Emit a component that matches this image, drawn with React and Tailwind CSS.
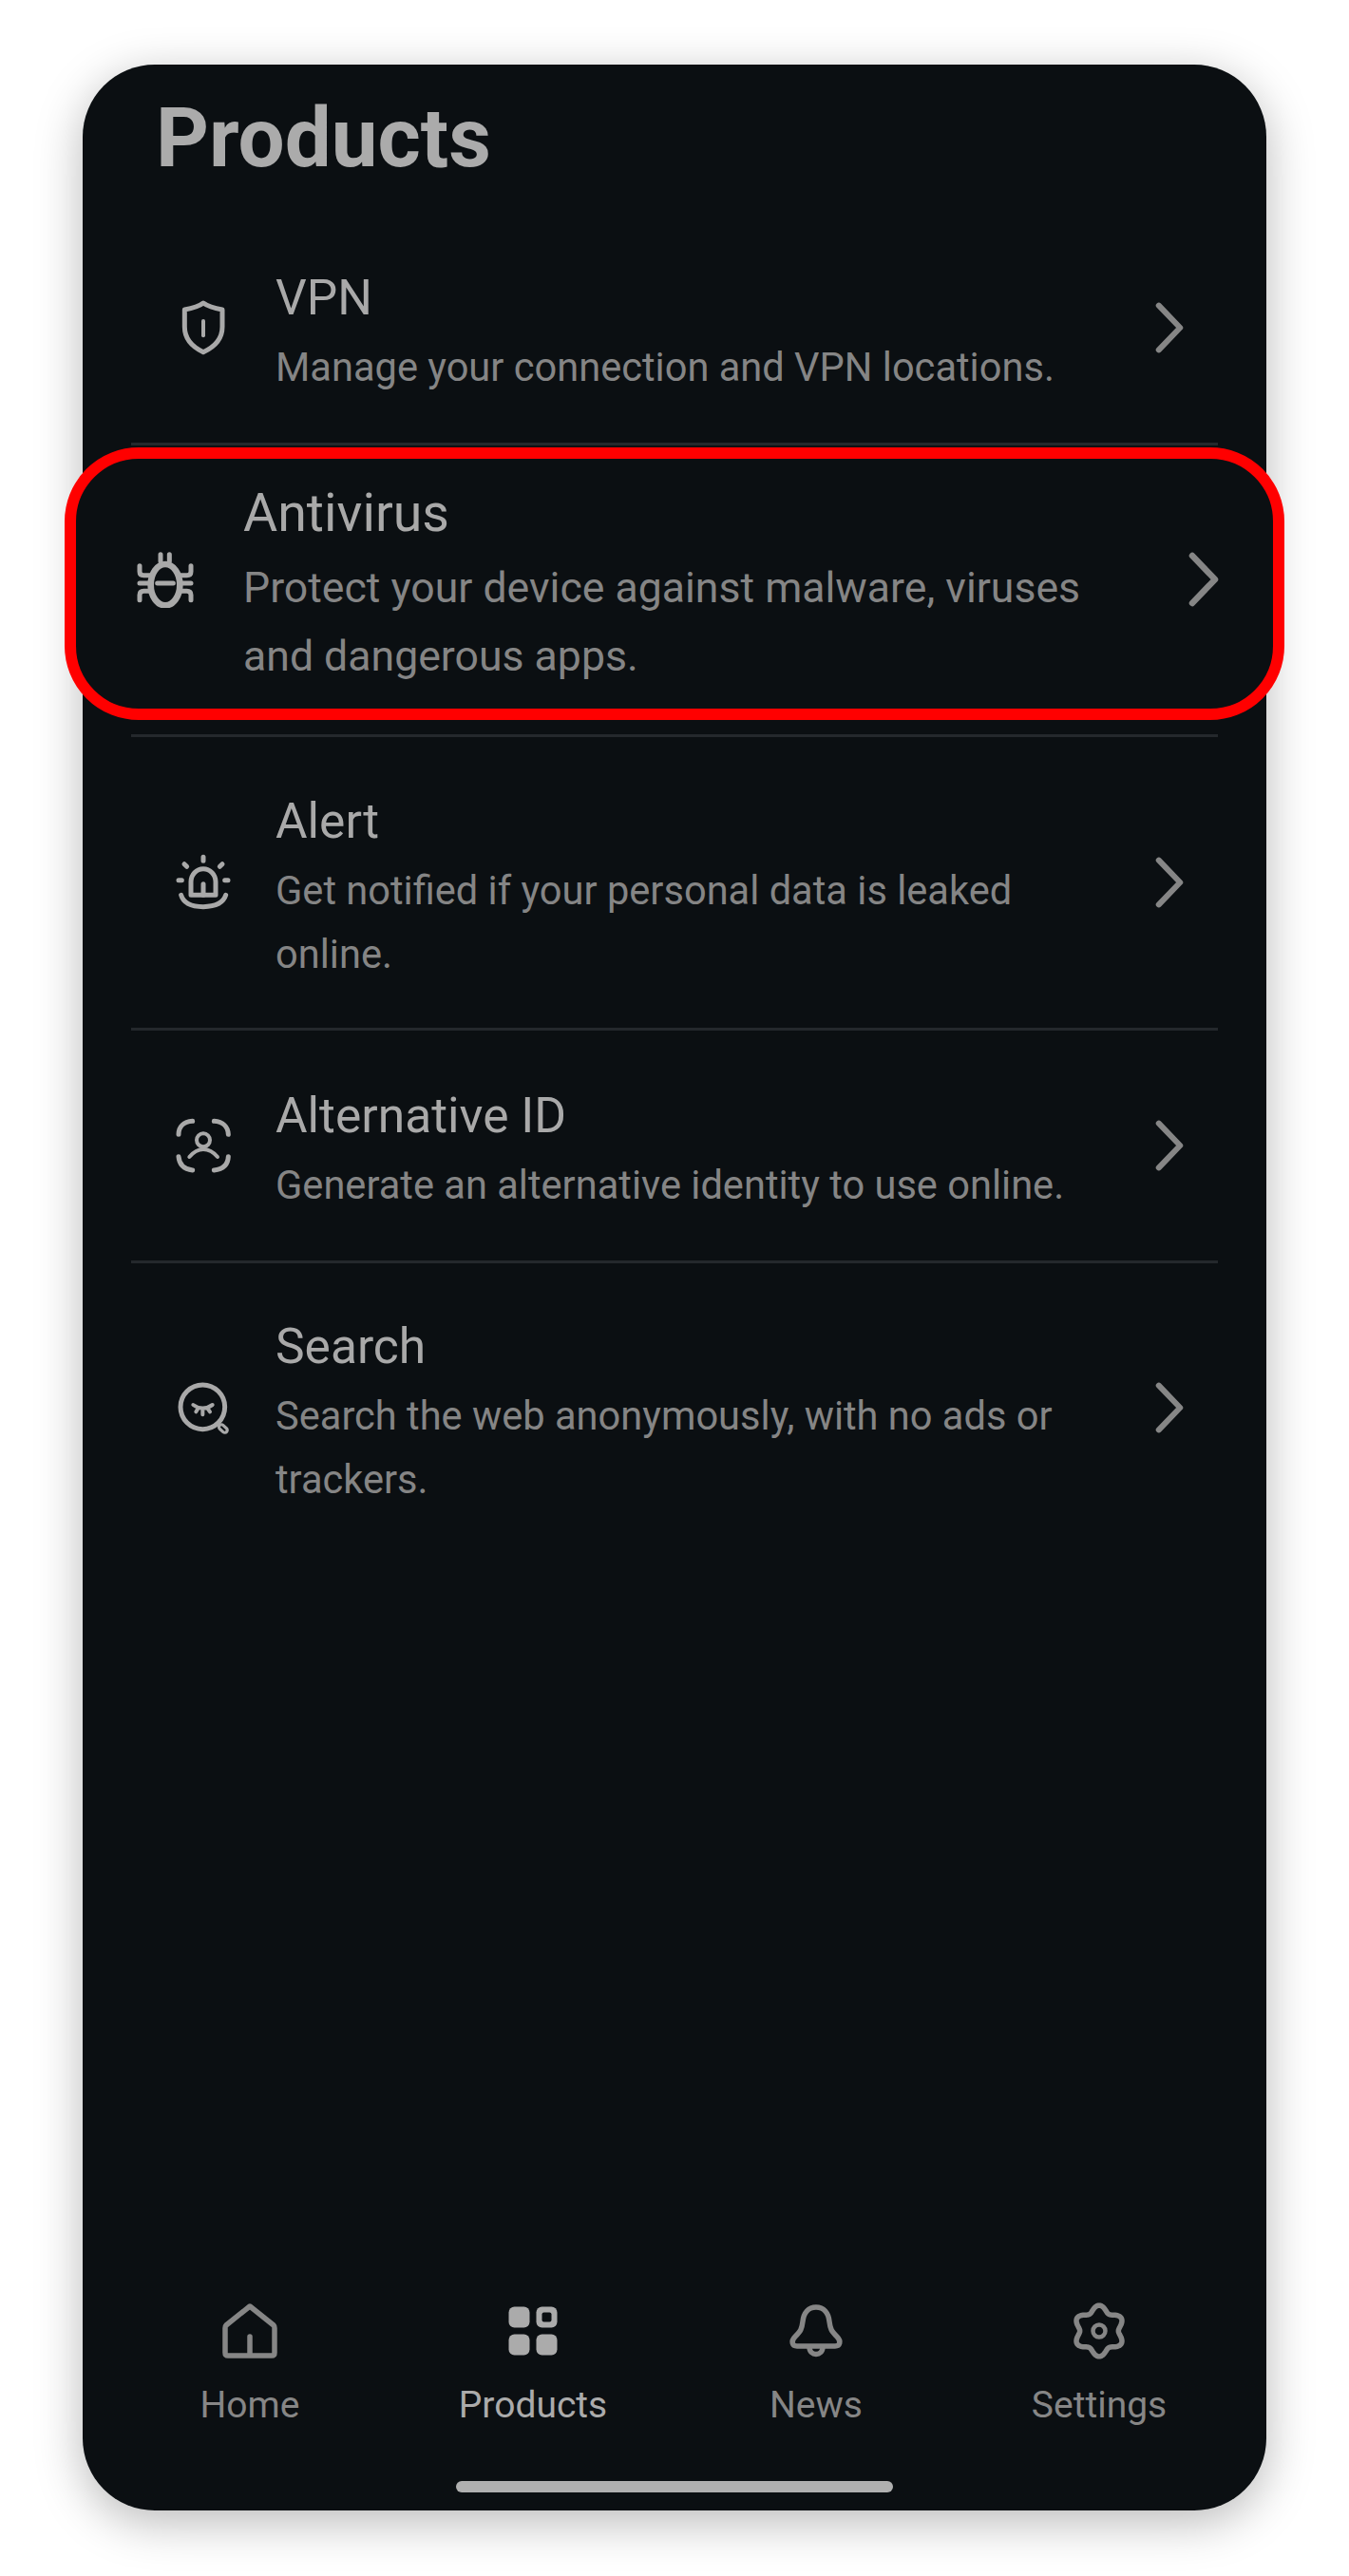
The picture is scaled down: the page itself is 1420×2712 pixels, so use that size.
import React from "react";

const BG = "#0b0f12";

function Shield() {
  return (
    <svg viewBox="72 43 180 180" className="w-full h-full" fill="none" stroke="#a9a9a9" strokeLinecap="round" strokeLinejoin="round">
      <path strokeWidth="15" d="M162 55C180 68 200 72 222 76V130C222 170 195 195 162 210C130 195 103 170 103 130V76C125 72 145 68 162 55Z" />
      <path strokeWidth="12" d="M162 112V158" />
    </svg>
  );
}
function Bug() {
  return (
    <svg viewBox="75 85 180 180" className="w-full h-full" fill="none" stroke="#a9a9a9" strokeLinecap="round" strokeLinejoin="round" strokeWidth="15">
      <ellipse cx="165" cy="192" rx="46" ry="65" strokeWidth="20" />
      <path d="M150 96V118M178 96V118M140 187H190" />
      <path d="M120 162H97Q84 162 84 150V132M120 187H84M120 212H97Q84 212 84 224V240" />
      <path d="M210 162H233Q246 162 246 150V132M210 187H246M210 212H233Q246 212 246 224V240" />
    </svg>
  );
}
function AlertIcon() {
  return (
    <svg viewBox="72 40 180 180" className="w-full h-full" fill="none" stroke="#a9a9a9" strokeLinecap="round" strokeLinejoin="round" strokeWidth="15">
      <path d="M162 50V62M102 72L110 80M84 123H94M230 123H240M214 80L222 72" />
      <path d="M123 170V128A39 41 0 0 1 201 128V170Z" />
      <path d="M162 135V170" />
      <path d="M92 170Q102 206 162 207Q222 206 233 170" />
    </svg>
  );
}
function IdIcon() {
  return (
    <svg viewBox="72 75 180 180" className="w-full h-full" fill="none" stroke="#a9a9a9" strokeLinecap="round" strokeLinejoin="round">
      <path strokeWidth="15" d="M84 130C84 105 100 90 128 88M196 88C224 90 240 105 241 130M84 200C86 226 102 240 128 243M241 200C240 226 224 240 196 243" />
      <circle cx="162" cy="148" r="21" strokeWidth="12" />
      <path strokeWidth="12" d="M118 201C134 182 148 177 162 177C176 177 191 182 207 201" />
    </svg>
  );
}
function SearchIcon() {
  return (
    <svg viewBox="75 65 180 180" className="w-full h-full" fill="none" stroke="#a9a9a9" strokeLinecap="round" strokeLinejoin="round">
      <circle cx="163" cy="153" r="70" strokeWidth="15" />
      <path strokeWidth="25" d="M222 216L233 226" />
      <path strokeWidth="6" stroke={BG} d="M222 216L233 226" />
      <path strokeWidth="12" d="M133 146Q163 168 194 146M148 158L142 168M163 162V177M179 158L186 168" />
    </svg>
  );
}
function Chevron({ className }) {
  return (
    <svg viewBox="0 0 36 60" className={className} fill="none" stroke="#868686" strokeWidth="6.5" strokeLinecap="round" strokeLinejoin="round">
      <path d="M6 5L30 30L6 55" />
    </svg>
  );
}
function HomeIcon() {
  return (
    <svg viewBox="0 0 60 60" className="w-[60px] h-[60px]" fill="none" stroke="#868686" strokeWidth="5.5" strokeLinecap="round" strokeLinejoin="round">
      <path d="M30 4L55 24Q56 25 56 27V53Q56 56 53 56H7Q4 56 4 53V27Q4 25 5 24Z" />
      <path d="M30 36V54" />
    </svg>
  );
}
function GridIcon() {
  return (
    <svg viewBox="0 0 60 60" className="w-[60px] h-[60px]" fill="#ababab">
      <rect x="4.5" y="4.5" width="22" height="22" rx="6" />
      <rect x="33.5" y="4.5" width="22" height="22" rx="6" />
      <rect x="39.5" y="10.5" width="10" height="10" rx="2" fill={BG} />
      <rect x="4.5" y="33.5" width="22" height="22" rx="6" />
      <rect x="33.5" y="33.5" width="22" height="22" rx="6" />
    </svg>
  );
}
function BellIcon() {
  return (
    <svg viewBox="0 0 60 60" className="w-[60px] h-[60px]" fill="none" stroke="#868686" strokeWidth="5.5" strokeLinecap="round" strokeLinejoin="round">
      <path d="M30 5C38 5 43 11 44 20C45 28 46 30 52 36C57 41 55 46 50 46H10C5 46 3 41 8 36C14 30 15 28 16 20C17 11 22 5 30 5Z" />
      <path d="M23 47C23 57 37 57 37 47" />
    </svg>
  );
}
const gearPath = (() => {
  const pts = [];
  for (let i = 0; i < 120; i++) {
    const t = (i / 120) * Math.PI * 2;
    const r = 23.6 + 3.3 * Math.cos(6 * t);
    pts.push(`${(30 + r * Math.sin(t)).toFixed(2)} ${(30 - r * Math.cos(t)).toFixed(2)}`);
  }
  return "M" + pts.join("L") + "Z";
})();
function GearIcon() {
  return (
    <svg viewBox="0 0 60 60" className="w-[60px] h-[60px]" fill="none" stroke="#868686" strokeWidth="5.5" strokeLinejoin="round">
      <path d={gearPath} />
      <circle cx="30" cy="30" r="6.5" strokeWidth="4.5" />
    </svg>
  );
}

function Row({ icon, title, desc, heightClass }) {
  return (
    <div className={`flex items-center pl-[46px] ${heightClass}`}>
      <div className="w-[60px] h-[60px] shrink-0">{icon}</div>
      <div className="w-[899px] pl-[46px] pt-[5px] shrink-0">
        <div className="text-[51.5px] leading-[78px] text-[#a9a9a9]">{title}</div>
        <div className="text-[41.6px] leading-[67px] text-[#858585]">{desc}</div>
      </div>
      <Chevron className="w-[34px] h-[56px] shrink-0 ml-[71px]" />
    </div>
  );
}
function Divider() {
  return <div className="h-[3px] bg-[#24282c]" />;
}
function NavItem({ icon, label, active }) {
  return (
    <div className="flex-1 flex flex-col items-center">
      {icon}
      <div className={`text-[39px] leading-[44px] mt-[26px] ${active ? "text-[#ababab]" : "text-[#868686]"}`}>{label}</div>
    </div>
  );
}

export default function App() {
  return (
    <div className="bg-white min-h-[2712px] pt-[68px] pl-[87px]" style={{ fontFamily: "Roboto, sans-serif" }}>
      <div className="w-[1246px] h-[2575px] rounded-[76px] bg-[#0b0f12] shadow-[0_12px_50px_rgba(0,0,0,0.28)] flex flex-col">
        <div className="h-[155px] pl-[77px] pt-[27px] text-[87px] leading-[100px] font-bold text-[#ababab]">Products</div>
        <div className="mx-[51px] flex flex-col">
          <Row icon={<Shield />} title="VPN" desc="Manage your connection and VPN locations." heightClass="h-[243px]" />
          <Divider />
          <div className="-mx-[70px] mt-[2px] mb-[15px] h-[287px] rounded-[78px] border-[12px] border-[#ff0000] bg-[#0b0f12] flex items-center pl-[64px]">
            <div className="w-[60px] h-[60px] shrink-0 -mt-[10px]"><Bug /></div>
            <div className="w-[982px] pl-[52px] shrink-0 -mt-[4px]">
              <div className="text-[55.5px] leading-[84px] text-[#a9a9a9]">Antivirus</div>
              <div className="text-[44.6px] leading-[72px] text-[#858585]">Protect your device against malware, viruses and dangerous apps.</div>
            </div>
            <Chevron className="w-[36px] h-[60px] shrink-0 ml-[63px] -mt-[10px]" />
          </div>
          <Divider />
          <Row icon={<AlertIcon />} title="Alert" desc="Get notified if your personal data is leaked online." heightClass="h-[306px]" />
          <Divider />
          <Row icon={<IdIcon />} title="Alternative ID" desc="Generate an alternative identity to use online." heightClass="h-[242px]" />
          <Divider />
          <Row icon={<SearchIcon />} title="Search" desc="Search the web anonymously, with no ads or trackers." heightClass="h-[304px]" />
        </div>
        <div className="mt-auto">
          <div className="flex px-[27px]">
            <NavItem icon={<HomeIcon />} label="Home" />
            <NavItem icon={<GridIcon />} label="Products" active />
            <NavItem icon={<BellIcon />} label="News" />
            <NavItem icon={<GearIcon />} label="Settings" />
          </div>
          <div className="mt-[58px] mb-[19px] mx-auto w-[460px] h-[12px] rounded-full bg-[#b0b0b0]" />
        </div>
      </div>
    </div>
  );
}
